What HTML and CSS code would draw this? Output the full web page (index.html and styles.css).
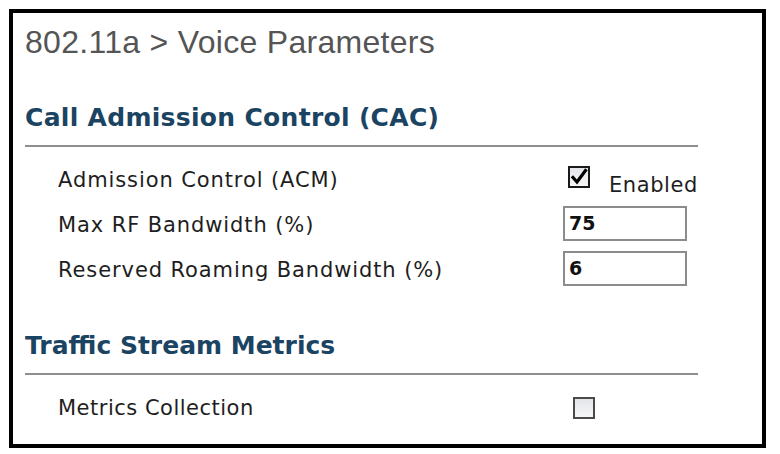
FILE: index.html
```html
<!DOCTYPE html>
<html>
<head lang="en">
    <meta charset="UTF-8">
    <title>802.11a Voice Parameters</title>
    <link rel="stylesheet" href="styles.css">
</head>
<body>
    <div id="panel">
        <h1 class="page-title">802.11a &gt; Voice Parameters</h1>

        <div class="section">
            <h2 class="section-title">Call Admission Control (CAC)</h2>
            <div class="rows">
                <div class="row">
                    <div class="label">Admission Control (ACM)</div>
                    <div class="control">
                        <span class="checkbox checked">
                            <svg width="18" height="18" viewBox="0 0 18 18">
                                <path d="M3 9.5 L7 14 L15.5 2.5" fill="none" stroke="#000" stroke-width="3.2" stroke-linecap="square"/>
                            </svg>
                        </span>
                        <span class="check-text">Enabled</span>
                    </div>
                </div>
                <div class="row">
                    <div class="label">Max RF Bandwidth (%)</div>
                    <div class="control">
                        <input type="text" class="field" value="75"/>
                    </div>
                </div>
                <div class="row">
                    <div class="label">Reserved Roaming Bandwidth (%)</div>
                    <div class="control">
                        <input type="text" class="field" value="6"/>
                    </div>
                </div>
            </div>
        </div>

        <div class="section second">
            <h2 class="section-title">Traffic Stream Metrics</h2>
            <div class="rows">
                <div class="row">
                    <div class="label">Metrics Collection</div>
                    <div class="control">
                        <span class="checkbox"></span>
                    </div>
                </div>
            </div>
        </div>
    </div>
</body>
</html>
```

FILE: styles.css
```css
body {
    margin: 0;
    background-color: #fff;
}
#panel {
    width: 757px;
    height: 439px;
    margin: 9px;
    box-sizing: border-box;
    border: 4px solid #000;
    padding: 11px 64px 0 12px;   /* 右侧留白，让分隔线停在698px */
}
.page-title {
    margin: 0;
    font-family: "Liberation Sans", Arial, sans-serif;
    font-size: 32px;
    font-weight: normal;
    line-height: 36px;
    letter-spacing: 0.3px;
    color: #555;
}
.section {
    margin-top: 43px;
}
.section.second {
    margin-top: 39px;
}
.section-title {
    margin: 0;
    padding-bottom: 12px;
    border-bottom: 2px solid #8e8e8e;
    font-family: "DejaVu Sans", Verdana, sans-serif;
    font-size: 25px;
    font-weight: bold;
    line-height: 30px;
    letter-spacing: 0.3px;
    color: #1b4462;
}
.second .section-title {
    letter-spacing: 0;
}
.rows {
    padding-top: 10px;
    padding-left: 33px;
}
.row {
    display: flex;
    align-items: center;
    height: 45px;
}
.label {
    width: 505px;
    font-family: "DejaVu Sans", Verdana, sans-serif;
    font-size: 21px;
    line-height: 24px;
    letter-spacing: 0.9px;
    color: #1e1e1e;
}
.second .label {
    letter-spacing: 0.5px;
}
.control {
    display: flex;
    align-items: center;
}
.checkbox {
    width: 22px;
    height: 22px;
    margin-left: 10px;
    box-sizing: border-box;
    border: 2px solid #4a4a4a;
    background: linear-gradient(#e4e6ea, #f6f6f6);
    display: flex;
    align-items: center;
    justify-content: center;
}
.checkbox.checked {
    border-color: #1a1a1a;
    margin-top: -6px;
}
.check-text {
    margin-left: 19px;
    margin-top: 10px;
    font-family: "DejaVu Sans", Verdana, sans-serif;
    font-size: 21px;
    line-height: 24px;
    letter-spacing: 0.6px;
    color: #1e1e1e;
}
.field {
    width: 124px;
    height: 35px;
    margin: -3px 0 0 0;
    box-sizing: border-box;
    border: 2px solid #8c8c8c;
    padding: 0 4px;
    font-family: "DejaVu Sans", Verdana, sans-serif;
    font-size: 19px;
    font-weight: bold;
    color: #111;
    background-color: #fff;
    outline: none;
}
```
